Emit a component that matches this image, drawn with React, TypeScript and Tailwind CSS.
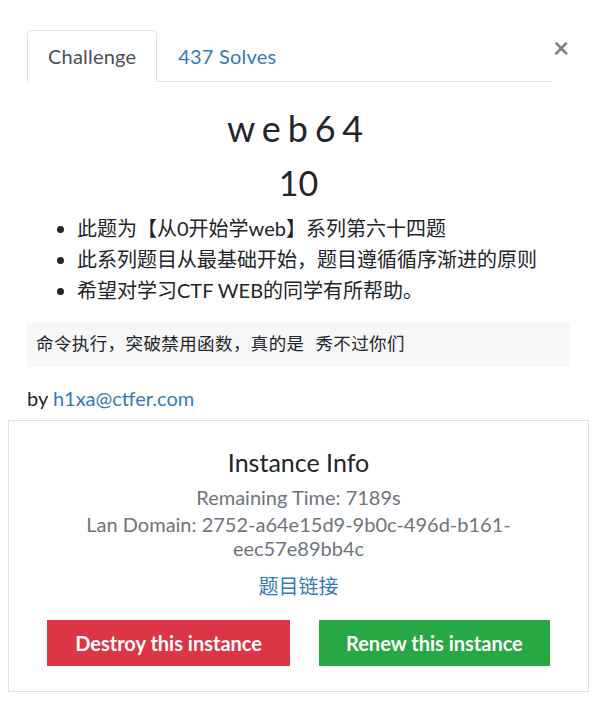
import { useState } from "react";

// 챌린지 모달 (인스턴스 정보 포함)
const tabs = ["Challenge", "437 Solves"];

const notes = [
  "此题为【从0开始学web】系列第六十四题",
  "此系列题目从最基础开始，题目遵循循序渐进的原则",
  "希望对学习CTF WEB的同学有所帮助。",
];

export default function App() {
  const [active, setActive] = useState(0);

  return (
    <div
      className="w-[597px] h-[706px] bg-white px-[27px] pt-[30px] text-[20px] text-[#212529] overflow-hidden"
      style={{ fontFamily: 'Lato, "Noto Sans CJK SC", sans-serif' }}
    >
      {/* 탭 + 닫기 */}
      <div className="flex items-start">
        <ul className="flex flex-1 border-b border-[#dee2e6]">
          {tabs.map((t, i) => (
            <li key={t} className="-mb-px">
              <button
                type="button"
                onClick={() => setActive(i)}
                className={
                  i === active
                    ? "block h-[52px] px-5 leading-[30px] py-[10px] border border-[#dee2e6] border-b-white rounded-t-[5px] bg-white text-[#495057] tracking-[0.2px]"
                    : "block h-[52px] px-5 leading-[30px] py-[10px] border border-transparent text-[#337ab7] tracking-[0.2px]"
                }
              >
                {t}
              </button>
            </li>
          ))}
        </ul>
        <button
          type="button"
          className="mt-[2px] w-[18px] text-center text-[28px] font-bold leading-[30px] text-[#000]/50"
        >
          ×
        </button>
      </div>

      {/* 제목 / 점수 */}
      <h3 className="pt-[25px] text-center text-[36px] leading-[42px] tracking-[0.19em] font-normal">
        web64
      </h3>
      <h4 className="mt-[15px] text-center text-[34px] leading-[38px]">10</h4>

      {/* 설명 */}
      <ul className="mt-[11px] list-disc pl-[50px] leading-[31px] [text-spacing-trim:space-all]">
        {notes.map((n) => (
          <li key={n}>{n}</li>
        ))}
      </ul>

      <pre
        className="mt-[17px] bg-[#f7f7f7] px-[9px] py-[9px] text-[17.5px] leading-[26px] tracking-[0.4px] text-[#212529]"
        style={{ fontFamily: '"Liberation Mono", "Noto Sans CJK SC", monospace' }}
      >
        命令执行，突破禁用函数，真的是 秀不过你们
      </pre>

      <p className="mt-[16px] leading-[30px]">
        by <a className="text-[#337ab7]">h1xa@ctfer.com</a>
      </p>

      {/* 인스턴스 정보 */}
      <div className="-mx-[19px] mt-[7px] border border-[#dfdfdf] px-5 pt-[26px] pb-[25px] text-center">
        <h5 className="text-[25px] leading-[30px]">Instance Info</h5>
        <h6 className="mt-[8px] text-[20px] leading-[24px] text-[#6c757d]">
          Remaining Time: 7189s
        </h6>
        <h6 className="mt-[3px] px-[40px] text-[20px] leading-[24px] text-[#6c757d] break-words">
          Lan Domain: 2752-a64e15d9-9b0c-496d-b161-eec57e89bb4c
        </h6>
        <p className="mt-[11px] leading-[30px]">
          <a className="text-[#337ab7]">题目链接</a>
        </p>
        <div className="mt-[19px] flex justify-center gap-[29px]">
          <button
            type="button"
            className="bg-[#dc3545] px-[28px] py-[9px] text-[20px] font-bold leading-[28px] text-white"
          >
            Destroy this instance
          </button>
          <button
            type="button"
            className="bg-[#28a745] px-[27px] py-[9px] text-[20px] font-bold leading-[28px] text-white"
          >
            Renew this instance
          </button>
        </div>
      </div>
    </div>
  );
}
